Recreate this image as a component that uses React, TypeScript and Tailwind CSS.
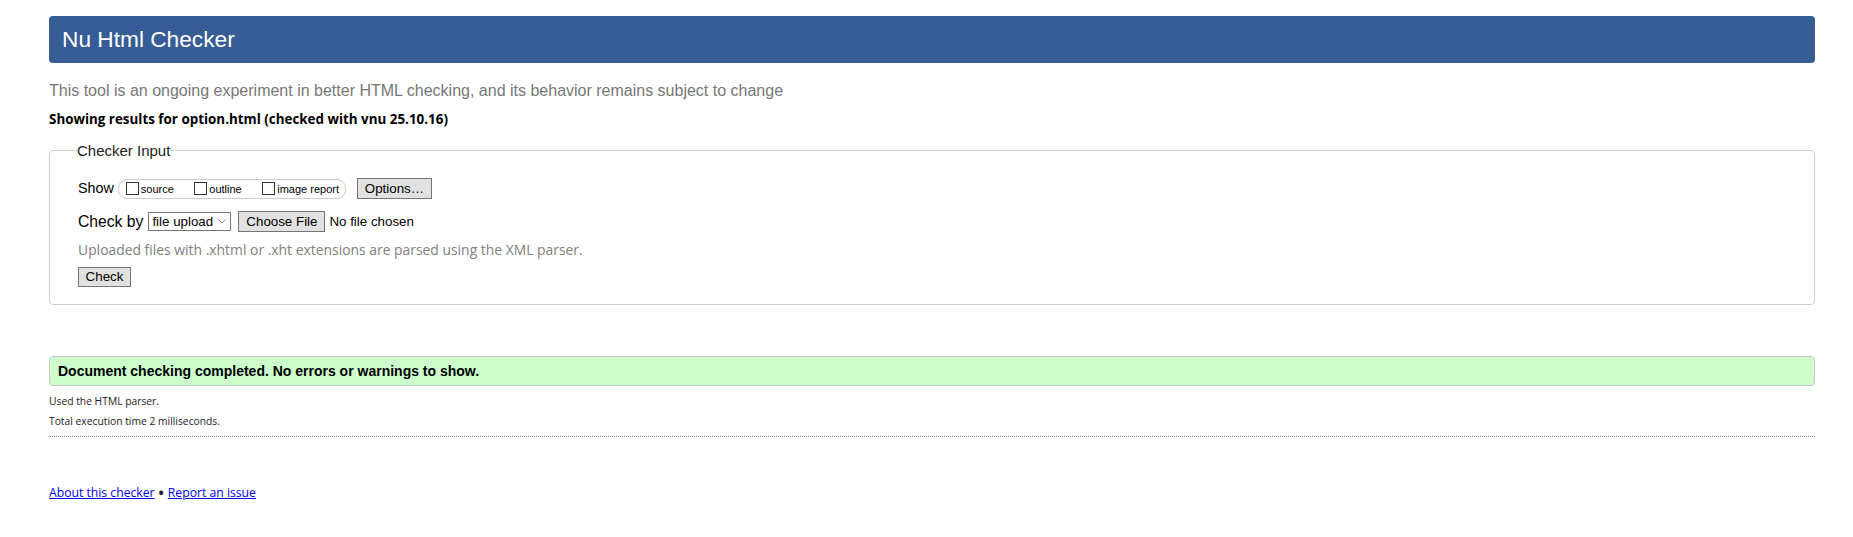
import type { ReactNode } from "react";

const sans = "font-['Open_Sans','Noto_Sans',sans-serif]";

function Box({ label }: { label: string }) {
  return (
    <label className="flex items-center gap-[2px] text-[11px] leading-[13px]">
      <span className="block h-[13px] w-[13px] border border-[#333] bg-white" />
      <span className="pt-[2px]">{label}</span>
    </label>
  );
}

function Button({ children, className = "" }: { children: ReactNode; className?: string }) {
  return (
    <button
      type="button"
      className={`flex items-center justify-center border border-[#767676] bg-[#e1e1e1] text-[13.33px] leading-none text-black ${className}`}
    >
      {children}
    </button>
  );
}

export default function App() {
  return (
    <div className="min-h-[537px] bg-white pl-[49px] pr-[38px] pt-[16px] font-['Liberation_Sans',Arial,sans-serif] text-black">
      <header className="flex h-[47px] items-center rounded-[4px] bg-[#365d95] px-[13px]">
        <h1 className="text-[22.7px] leading-none text-white">Nu Html Checker</h1>
      </header>

      <p className="mt-[19px] text-[16px] leading-[18px] text-[#777]">
        This tool is an ongoing experiment in better HTML checking, and its behavior remains subject to change
      </p>

      <p className={`mt-[10px] ${sans} text-[13.4px] font-bold leading-[19px]`}>
        Showing results for option.html (checked with vnu 25.10.16)
      </p>

      <fieldset className="mt-[13px] rounded-[4px] border border-[#ccc] pb-[17px] pl-[28px]">
        <legend className="ml-[-1px] text-[15px] leading-[17px] text-[#222]">Checker Input</legend>

        <div className="mt-[19px] flex h-[21px] items-center">
          <span className="mr-[4px] text-[14.3px]">Show</span>
          <div className="flex h-[20px] items-center gap-[20.5px] rounded-[9px] border border-[#ccc] pl-[7px] pr-[6px]">
            <Box label="source" />
            <Box label="outline" />
            <Box label="image report" />
          </div>
          <Button className="ml-[11px] h-[21px] w-[75px]">Options…</Button>
        </div>

        <div className="mt-[12px] flex h-[21px] items-center">
          <span className="mr-[5px] text-[15.7px]">Check by</span>
          <div className="flex h-[19px] w-[83px] items-center justify-between border border-[#767676] bg-white pl-[3px] pr-[4px] text-[13.33px] leading-none">
            <span>file upload</span>
            <svg width="8" height="5" viewBox="0 0 8 5" fill="none" stroke="#888" strokeWidth="1">
              <path d="M0.5 0.5 4 4 7.5 0.5" />
            </svg>
          </div>
          <Button className="ml-[7px] h-[21px] w-[87px]">Choose File</Button>
          <span className="ml-[4px] text-[13.33px]">No file chosen</span>
        </div>

        <p className={`mt-[8px] ${sans} text-[13.9px] leading-[19px] text-[#808080]`}>
          Uploaded files with .xhtml or .xht extensions are parsed using the XML parser.
        </p>

        <Button className="mt-[8px] h-[20px] w-[53px]">Check</Button>
      </fieldset>

      <div className="mt-[51px] flex h-[30px] items-center rounded-[4px] border border-[#c8c8c8] bg-[#ccffcc] pl-[8px] text-[14px] font-bold">
        Document checking completed. No errors or warnings to show.
      </div>

      <div className={`mt-[5px] ${sans} text-[10.3px] leading-[20px] text-[#222]`}>
        <p>Used the HTML parser.</p>
        <p>Total execution time 2 milliseconds.</p>
      </div>

      <hr className="mt-[5px] border-0 border-t border-dotted border-[#888]" />

      <p className={`mt-[47px] flex items-center ${sans} text-[12.2px] leading-[18px]`}>
        <a href="#" className="text-[#0000ee] underline">About this checker</a>
        <span className="mx-[4px] text-[14px] font-bold text-[#222]">•</span>
        <a href="#" className="text-[#0000ee] underline">Report an issue</a>
      </p>
    </div>
  );
}
